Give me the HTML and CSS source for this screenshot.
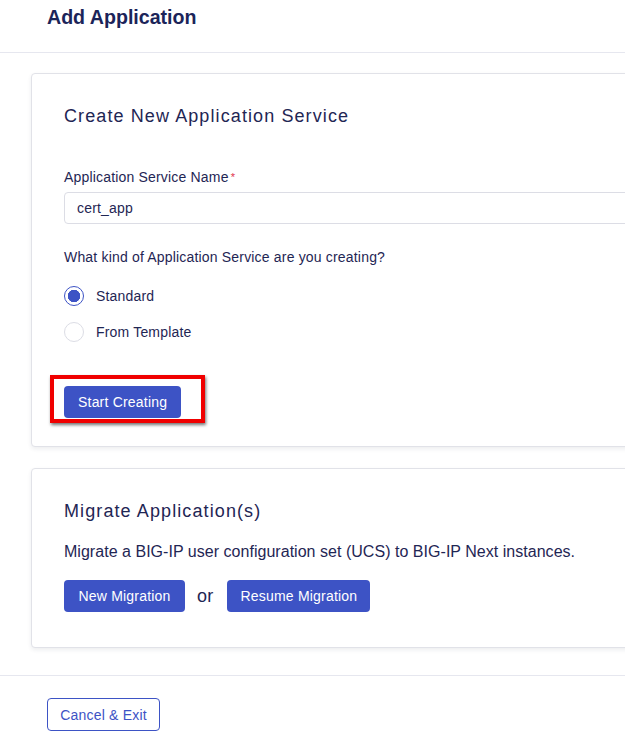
FILE: index.html
```html
<!DOCTYPE html>
<html>
<head>
<meta charset="utf-8">
<link rel="stylesheet" href="styles.css">
</head>
<body>
<div class="page">
  <header class="top">
    <h1 class="page-title">Add Application</h1>
  </header>
  <main class="content">
    <section class="card card-create">
      <h2 class="card-title">Create New Application Service</h2>
      <label class="field-label">Application Service Name<span class="req">*</span></label>
      <div class="input">cert_app</div>
      <p class="question">What kind of Application Service are you creating?</p>
      <div class="radios">
        <div class="radio-row"><span class="radio checked"></span><span>Standard</span></div>
        <div class="radio-row"><span class="radio"></span><span>From Template</span></div>
      </div>
      <div class="highlight-wrap">
        <div class="highlight">
          <button class="btn">Start Creating</button>
        </div>
      </div>
    </section>
    <section class="card card-migrate">
      <h2 class="card-title">Migrate Application(s)</h2>
      <p class="migrate-text">Migrate a BIG-IP user configuration set (UCS) to BIG-IP Next instances.</p>
      <div class="migrate-actions">
        <button class="btn btn-new">New Migration</button>
        <span class="or">or</span>
        <button class="btn btn-resume">Resume Migration</button>
      </div>
    </section>
  </main>
  <footer class="bottom">
    <button class="btn-outline">Cancel &amp; Exit</button>
  </footer>
</div>
</body>
</html>
```

FILE: styles.css
```css
* { box-sizing: border-box; }
html, body {
  margin: 0;
  padding: 0;
  background: #ffffff;
  overflow: hidden;
}
body {
  font-family: "Liberation Sans", Arial, sans-serif;
  color: #1f2654;
  width: 625px;
  height: 751px;
  letter-spacing: 0.18px;
}
.page {
  display: flex;
  flex-direction: column;
}
.top {
  height: 53px;
  border-bottom: 1px solid #e6e7ef;
  padding-left: 47px;
}
.page-title {
  margin: 0;
  padding-top: 5px;
  font-size: 19.6px;
  font-weight: bold;
  color: #1b2459;
  line-height: 24px;
  letter-spacing: 0;
}
.content {
  padding: 20px 0 27px 31px;
  display: flex;
  flex-direction: column;
  gap: 21px;
  border-bottom: 1px solid #e6e7ef;
}
.card {
  width: 640px;
  border: 1px solid #e1e2e8;
  border-radius: 4px;
  background: #fff;
  box-shadow: 0 2px 4px rgba(30, 35, 70, 0.08);
  padding: 0 0 0 32px;
}
.card-create {
  height: 374px;
  padding-top: 30px;
}
.card-migrate {
  height: 180px;
  padding-top: 30px;
}
.card-title {
  margin: 0;
  font-size: 18px;
  font-weight: normal;
  letter-spacing: 1.1px;
  line-height: 24px;
  color: #1f2654;
}
.field-label {
  display: block;
  margin-top: 40px;
  font-size: 14px;
  line-height: 18px;
  color: #1f2654;
}
.req {
  color: #e0344a;
  font-size: 11px;
  vertical-align: top;
  margin-left: 2px;
}
.input {
  margin-top: 6px;
  height: 32px;
  border: 1px solid #dcdde5;
  border-radius: 4px;
  padding-left: 12px;
  font-size: 14px;
  line-height: 30px;
  color: #1f2654;
}
.question {
  margin: 24px 0 0 0;
  font-size: 14px;
  line-height: 18px;
}
.radios {
  margin-top: 20px;
  display: flex;
  flex-direction: column;
  gap: 16px;
}
.radio-row {
  display: flex;
  align-items: center;
  gap: 12px;
  font-size: 14px;
  height: 20px;
}
.radio {
  width: 20px;
  height: 20px;
  border-radius: 50%;
  border: 1px solid #dcdde5;
  background: #fff;
  display: inline-block;
}
.radio.checked {
  border: 1px solid #3d53c5;
  background: radial-gradient(circle, #3d53c5 0 6px, #fff 6.5px);
}
.highlight-wrap {
  margin-top: 33px;
  margin-left: -14px;
  display: flex;
}
.highlight {
  border: 4px solid #f00000;
  padding: 7px 20px 1px 10px;
  box-shadow: 1px 2px 3px rgba(0, 0, 0, 0.55);
}
.btn {
  border: none;
  background: #3d53c5;
  color: #fff;
  font-family: "Liberation Sans", Arial, sans-serif;
  font-size: 14px;
  letter-spacing: 0.2px;
  height: 32px;
  border-radius: 4px;
  padding: 0 14px;
  cursor: pointer;
}
.migrate-text {
  margin: 19px 0 0 0;
  font-size: 16px;
  line-height: 20px;
  letter-spacing: 0.03px;
}
.migrate-actions {
  margin-top: 18px;
  display: flex;
  align-items: center;
}
.btn-new { width: 121px; padding: 0; }
.btn-resume { width: 143px; padding: 0; }
.or {
  font-size: 18px;
  margin: 0 14px 0 12px;
}
.bottom {
  padding: 22px 0 0 47px;
}
.btn-outline {
  height: 33px;
  width: 113px;
  border: 1px solid #3d53c5;
  border-radius: 4px;
  background: #fff;
  color: #3d53c5;
  font-family: "Liberation Sans", Arial, sans-serif;
  font-size: 14px;
  letter-spacing: 0.2px;
  padding: 0;
}
```
